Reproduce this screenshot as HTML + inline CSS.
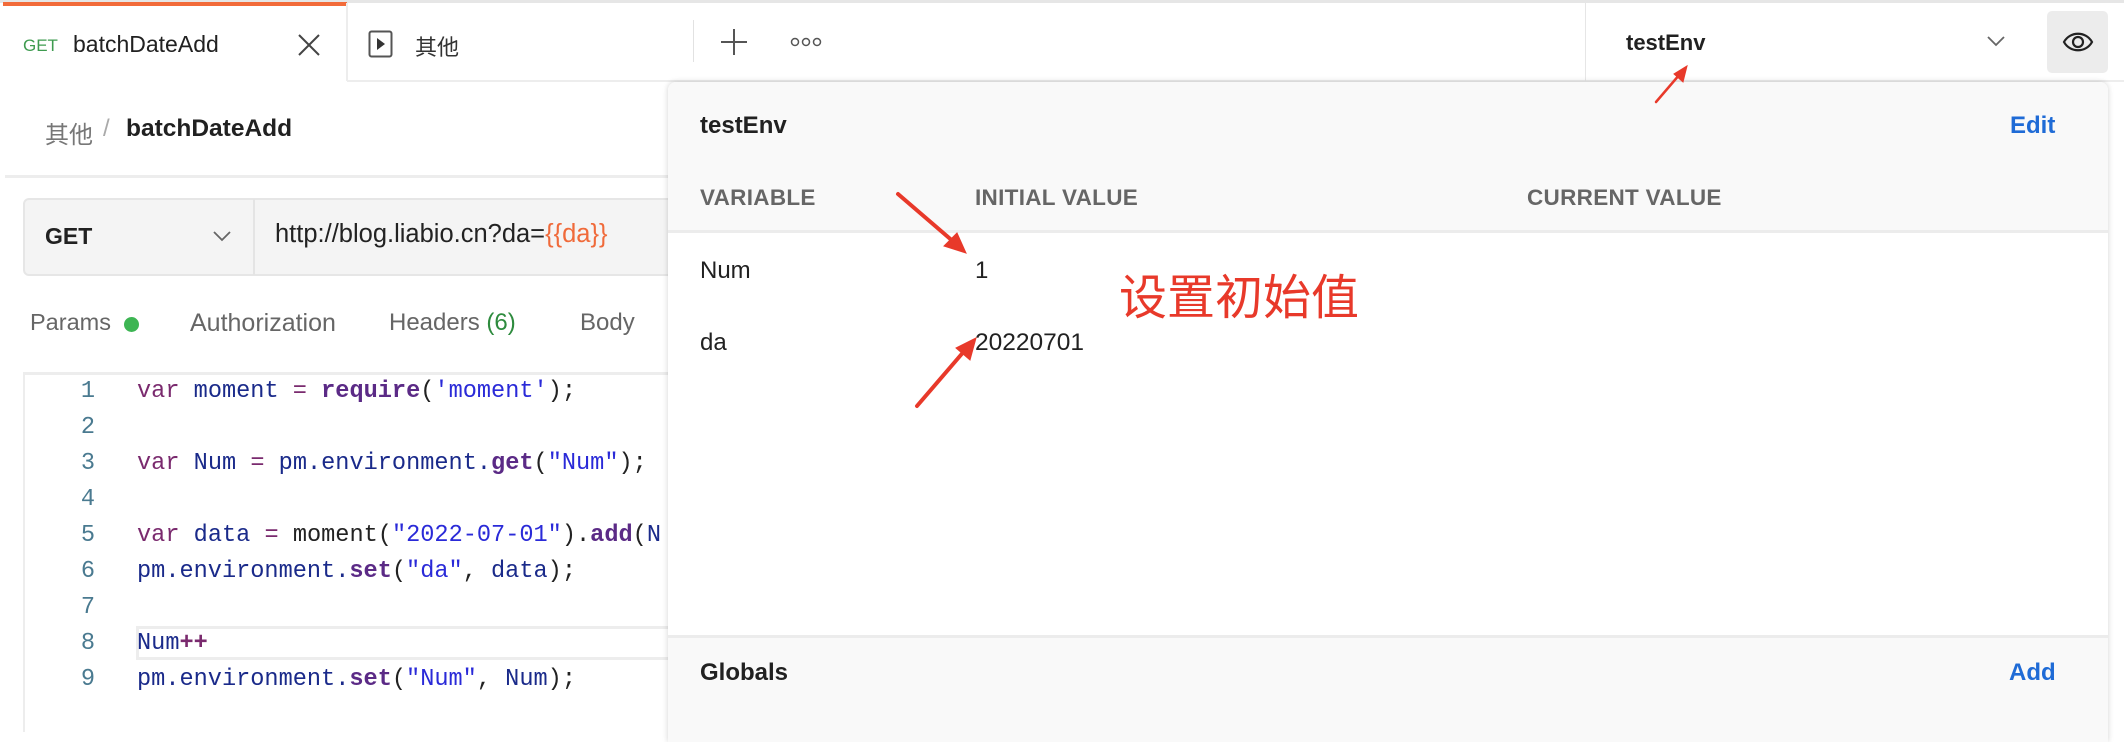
<!DOCTYPE html>
<html><head><meta charset="utf-8"><style>
*{margin:0;padding:0;box-sizing:border-box}
body{width:2124px;height:724px;overflow:hidden;background:#fff;font-family:"Liberation Sans","Noto Sans CJK SC",sans-serif;color:#212121;position:relative}
.a{position:absolute;white-space:nowrap}
.code{font-family:"Liberation Mono","DejaVu Sans Mono",monospace;font-size:23.6px}
.ln{color:#4a7a90;width:40px;text-align:right;left:55px}
.k{color:#7a2a6e}.i{color:#1a2a8a}.f{color:#5b2a86;font-weight:bold}.s{color:#2a2ad8}.p{color:#222}
</style></head><body>
<div class="a" style="left:0;top:0;width:2124px;height:3px;background:#e6e6e6"></div>
<div class="a" style="left:0;top:80px;width:2124px;height:2px;background:#ededed"></div>
<div class="a" style="left:0;top:3px;width:347px;height:79px;background:#fff"></div>
<div class="a" style="left:3px;top:2px;width:344px;height:4px;background:#f26b3a"></div>
<div class="a" style="left:346px;top:3px;width:2px;height:78px;background:#ededed"></div>
<div class="a" style="left:23px;top:36px;font-size:17px;color:#3e9b4f">GET</div>
<div class="a" style="left:73px;top:31px;font-size:23px">batchDateAdd</div>
<svg class="a" style="left:296px;top:32px" width="26" height="26"><path d="M3 3L23 23M23 3L3 23" stroke="#444" stroke-width="2"/></svg>
<svg class="a" style="left:368px;top:30px" width="26" height="28"><rect x="1.5" y="1.5" width="22" height="25" rx="2" fill="none" stroke="#555" stroke-width="2"/><path d="M9 8L17 14L9 20Z" fill="#333"/></svg>
<div class="a" style="left:415px;top:30px;font-size:22px;color:#333">其他</div>
<div class="a" style="left:693px;top:20px;width:1px;height:42px;background:#e2e2e2"></div>
<svg class="a" style="left:720px;top:28px" width="28" height="28"><path d="M14 1V27M1 14H27" stroke="#555" stroke-width="2"/></svg>
<svg class="a" style="left:790px;top:36px" width="32" height="12"><circle cx="5" cy="6" r="3.5" fill="none" stroke="#555" stroke-width="1.5"/><circle cx="16" cy="6" r="3.5" fill="none" stroke="#555" stroke-width="1.5"/><circle cx="27" cy="6" r="3.5" fill="none" stroke="#555" stroke-width="1.5"/></svg>
<div class="a" style="left:1585px;top:3px;width:1px;height:78px;background:#e6e6e6"></div>
<div class="a" style="left:1626px;top:30px;font-size:22px;font-weight:bold">testEnv</div>
<svg class="a" style="left:1986px;top:34px" width="20" height="14"><path d="M2 3L10 11L18 3" fill="none" stroke="#666" stroke-width="1.8"/></svg>
<div class="a" style="left:2047px;top:11px;width:61px;height:62px;background:#ececec;border-radius:5px"></div>
<svg class="a" style="left:2062px;top:27px" width="32" height="30"><path d="M2 15C8 4 24 4 30 15C24 26 8 26 2 15Z" fill="none" stroke="#222" stroke-width="2.2"/><circle cx="16" cy="15" r="5" fill="none" stroke="#222" stroke-width="2.2"/></svg>
<div class="a" style="left:45px;top:115px;font-size:24px;color:#777">其他</div>
<div class="a" style="left:103px;top:115px;font-size:24px;color:#aaa">/</div>
<div class="a" style="left:126px;top:115px;font-size:24.5px;font-weight:bold">batchDateAdd</div>
<div class="a" style="left:5px;top:175px;width:670px;height:3px;background:#ededed"></div>
<div class="a" style="left:23px;top:198px;width:660px;height:78px;background:#f4f4f4;border:2px solid #e6e6e6;border-radius:6px"></div>
<div class="a" style="left:253px;top:199px;width:2px;height:76px;background:#e4e4e4"></div>
<div class="a" style="left:45px;top:223px;font-size:23px;font-weight:bold">GET</div>
<svg class="a" style="left:212px;top:229px" width="20" height="14"><path d="M2 3L10 11L18 3" fill="none" stroke="#666" stroke-width="1.8"/></svg>
<div class="a" style="left:275px;top:220px;font-size:25.5px;color:#222">http://blog.liabio.cn?da=<span style="color:#f06a3a">{{da}}</span></div>
<div class="a" style="left:30px;top:309px;font-size:23.5px;color:#666">Params</div>
<div class="a" style="left:124px;top:317px;width:15px;height:15px;border-radius:50%;background:#3db553"></div>
<div class="a" style="left:190px;top:309px;font-size:25px;color:#666">Authorization</div>
<div class="a" style="left:389px;top:309px;font-size:24px;color:#666">Headers <span style="color:#2e8b3e">(6)</span></div>
<div class="a" style="left:580px;top:309px;font-size:24px;color:#666">Body</div>
<div class="a" style="left:23px;top:372px;width:660px;height:360px;border-top:3px solid #ededed;border-left:2px solid #ededed"></div>
<div class="a" style="left:136px;top:626px;width:540px;height:34px;border:3px solid #ededed;border-right:none"></div>
<div class="code">
<div class="a ln" style="top:378px">1</div><div class="a" style="left:137px;top:378px"><span class="k">var</span> <span class="i">moment</span> <span class="k">=</span> <span class="f">require</span><span class="p">(</span><span class="s">'moment'</span><span class="p">);</span></div>
<div class="a ln" style="top:414px">2</div>
<div class="a ln" style="top:450px">3</div><div class="a" style="left:137px;top:450px"><span class="k">var</span> <span class="i">Num</span> <span class="k">=</span> <span class="i">pm.environment.</span><span class="f">get</span><span class="p">(</span><span class="s">"Num"</span><span class="p">);</span></div>
<div class="a ln" style="top:486px">4</div>
<div class="a ln" style="top:522px">5</div><div class="a" style="left:137px;top:522px"><span class="k">var</span> <span class="i">data</span> <span class="k">=</span> <span class="p">moment(</span><span class="s">"2022-07-01"</span><span class="p">).</span><span class="f">add</span><span class="p">(</span><span class="i">N</span></div>
<div class="a ln" style="top:558px">6</div><div class="a" style="left:137px;top:558px"><span class="i">pm.environment.</span><span class="f">set</span><span class="p">(</span><span class="s">"da"</span><span class="p">, </span><span class="i">data</span><span class="p">);</span></div>
<div class="a ln" style="top:594px">7</div>
<div class="a ln" style="top:630px">8</div><div class="a" style="left:137px;top:630px"><span class="i">Num</span><span class="k" style="font-weight:bold">++</span></div>
<div class="a ln" style="top:666px">9</div><div class="a" style="left:137px;top:666px"><span class="i">pm.environment.</span><span class="f">set</span><span class="p">(</span><span class="s">"Num"</span><span class="p">, </span><span class="i">Num</span><span class="p">);</span></div>
</div>
<div class="a" style="left:668px;top:82px;width:1440px;height:660px;background:#fff;border-radius:8px 8px 0 0;box-shadow:0 0 6px rgba(0,0,0,.18);overflow:hidden">
 <div class="a" style="left:0;top:0;width:1440px;height:151px;background:#f9f9f9;border-bottom:3px solid #ececec"></div>
 <div class="a" style="left:0;top:553px;width:1440px;height:120px;background:#f9f9f9;border-top:3px solid #ececec"></div>
</div>
<div class="a" style="left:700px;top:112px;font-size:24px;font-weight:bold">testEnv</div>
<div class="a" style="left:2010px;top:112px;font-size:24px;font-weight:bold;color:#1f6bd6">Edit</div>
<div class="a" style="left:700px;top:185px;font-size:22.5px;color:#666;font-weight:bold;letter-spacing:.3px">VARIABLE</div>
<div class="a" style="left:975px;top:185px;font-size:22.5px;color:#666;font-weight:bold;letter-spacing:.3px">INITIAL VALUE</div>
<div class="a" style="left:1527px;top:185px;font-size:22.5px;color:#666;font-weight:bold;letter-spacing:.3px">CURRENT VALUE</div>
<div class="a" style="left:700px;top:257px;font-size:24px">Num</div>
<div class="a" style="left:975px;top:257px;font-size:24px">1</div>
<div class="a" style="left:700px;top:329px;font-size:24px">da</div>
<div class="a" style="left:975px;top:329px;font-size:24.5px">20220701</div>
<div class="a" style="left:1119px;top:258px;font-size:48px;color:#e8392a">设置初始值</div>
<div class="a" style="left:700px;top:659px;font-size:24px;font-weight:bold">Globals</div>
<div class="a" style="left:2009px;top:659px;font-size:24px;font-weight:bold;color:#1f6bd6">Add</div>
<svg class="a" style="left:0;top:0" width="2124" height="724">
<g fill="#e8392a" stroke="#e8392a" stroke-linecap="round">
<path d="M898 194L955 243" stroke-width="4"/><path d="M966 253L944 246L957 233Z"/>
<path d="M917 406L966 349" stroke-width="4"/><path d="M976 338L970 360L956 348Z"/>
<path d="M1656 102L1680 74" stroke-width="2.5"/><path d="M1687 66L1683 82L1674 74Z"/>
</g></svg>
</body></html>
